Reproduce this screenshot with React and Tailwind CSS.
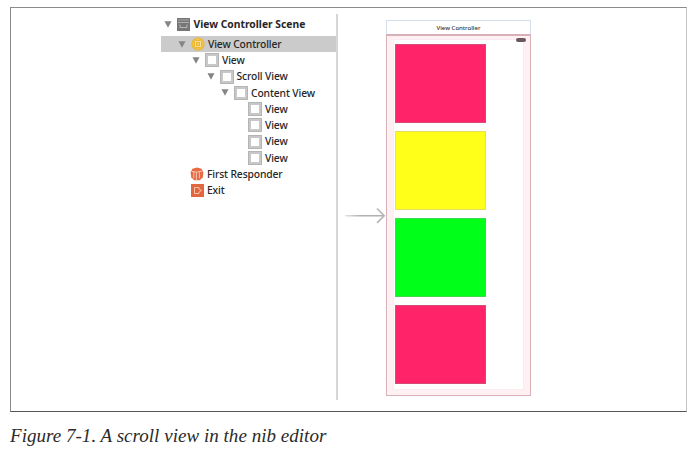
import React from "react";

function Triangle() {
  return (
    <svg className="block h-[7px] w-[8px] shrink-0" viewBox="0 0 8 7">
      <path d="M0.5 0.3H7.5L4 6.8Z" fill="#858585" />
    </svg>
  );
}

function ViewIcon() {
  return (
    <span className="flex h-[14px] w-[14px] shrink-0 items-center justify-center border border-[#b5b5b5] bg-[#c8c8c8]">
      <span className="h-[8px] w-[8px] bg-white" />
    </span>
  );
}

function SceneIcon() {
  return (
    <svg className="block h-[13px] w-[13px] shrink-0" viewBox="0 0 13 13">
      <rect width="13" height="13" fill="#767676" />
      <rect x="1" y="1" width="11" height="2" fill="#8f8f8f" />
      <rect x="1" y="4" width="11" height="1" fill="#b0b0b0" />
      <path d="M3 6.5V9.5H10V6.5" fill="none" stroke="#b8b8b8" strokeWidth="1" />
    </svg>
  );
}

function ControllerIcon() {
  return (
    <svg className="block h-[14px] w-[14px] shrink-0" viewBox="0 0 14 14">
      <circle cx="7" cy="7" r="6.6" fill="#ecb62f" />
      <circle cx="7" cy="7" r="4.9" fill="none" stroke="#f3cd68" strokeWidth="0.8" />
      <rect x="4.5" y="4.5" width="5" height="5" fill="#ecb62f" stroke="#f8df96" strokeWidth="1" />
      <rect x="6.3" y="6.3" width="1.4" height="1.4" fill="#fbe6a8" />
    </svg>
  );
}

function ResponderIcon() {
  return (
    <svg className="block h-[14px] w-[14px] shrink-0" viewBox="0 0 14 14">
      <path d="M7 0.5L11.6 1.8L13.4 5.6L12.8 10.2L9.8 13.2H4.2L1.2 10.2L0.6 5.6L2.4 1.8Z" fill="#e86a43" />
      <path d="M1.8 4.4L6.4 5.2L12.2 4M3.8 5V11M6.4 5.2V12.8M9.4 5.2V11.2" fill="none" stroke="#f9cebd" strokeWidth="0.9" />
    </svg>
  );
}

function ExitIcon() {
  return (
    <svg className="block h-[13px] w-[13px] shrink-0" viewBox="0 0 13 13">
      <rect width="13" height="13" fill="#e2673f" />
      <path d="M8 5V3.5H3.5V9.5H8V8M8 4.9L10.6 6.5L8 8.1" fill="none" stroke="#f6bfa9" strokeWidth="1" />
    </svg>
  );
}

const rows = [
  { label: "View Controller", indent: "pl-[17px]", open: true, icon: <ControllerIcon />, row: "bg-[#cbcbcb]" },
  { label: "View", indent: "pl-[31px]", open: true, icon: <ViewIcon /> },
  { label: "Scroll View", indent: "pl-[45.5px]", open: true, icon: <ViewIcon /> },
  { label: "Content View", indent: "pl-[60px]", open: true, icon: <ViewIcon /> },
  { label: "View", indent: "pl-[87px]", icon: <ViewIcon /> },
  { label: "View", indent: "pl-[87px]", icon: <ViewIcon /> },
  { label: "View", indent: "pl-[87px]", icon: <ViewIcon /> },
  { label: "View", indent: "pl-[87px]", icon: <ViewIcon /> },
  { label: "First Responder", indent: "pl-[29px]", icon: <ResponderIcon /> },
  { label: "Exit", indent: "pl-[30px]", icon: <ExitIcon /> },
];

function Outline() {
  return (
    <div className="h-[386px] w-[177px] border-r-2 border-[#d6d6d6] text-[10.3px] font-medium text-[#262626]">
      <div className="mb-[2px] flex h-[20px] items-center pl-[3px] font-bold">
        <Triangle />
        <span className="ml-[5px]"><SceneIcon /></span>
        <span className="ml-[3.5px] pt-[1px] whitespace-nowrap">View Controller Scene</span>
      </div>
      {rows.map((r, i) => (
        <div key={i} className={`flex h-[16.25px] items-center ${r.indent} ${r.row || ""}`}>
          {r.open && <span className="mr-[5px]"><Triangle /></span>}
          {r.icon}
          <span className="ml-[3px] pt-[1px] tracking-[-0.12px] whitespace-nowrap">{r.label}</span>
        </div>
      ))}
    </div>
  );
}

function EntryArrow() {
  return (
    <svg className="mt-[193px] ml-[6px] block h-[18px] w-[42px] shrink-0" viewBox="0 0 42 18">
      <defs>
        <linearGradient id="shaft" x1="0" x2="1">
          <stop offset="0" stopColor="#e4e4e4" />
          <stop offset="0.4" stopColor="#b0b0b0" />
        </linearGradient>
      </defs>
      <rect x="1" y="8" width="39" height="1.5" fill="url(#shaft)" />
      <path d="M33 1.5L40.2 8.7L33 15.9" fill="none" stroke="#b5b5b5" strokeWidth="1.6" />
    </svg>
  );
}

function Device() {
  return (
    <div className="mt-[6px] flex h-[376px] w-[145px] shrink-0 flex-col">
      <div className="flex h-[15px] items-center justify-center border border-b-0 border-[#d5dfee] pt-[1px] text-[6px] font-medium text-[#333]">
        View Controller
      </div>
      <div className="flex-1 border border-t-2 border-[#d8b0b8] bg-[#fff1f3] pt-[3px] pr-[6px] pb-[5px] pl-[6px]">
        <div className="relative h-[351px] border border-[#fdecef] bg-white">
          <div className="absolute -top-[2px] right-[-3px] h-[4px] w-[10px] rounded-full bg-[#6a5a5d]" />
          <div className="flex flex-col gap-[8px] pt-[4px] pl-[1px]">
            <div className="h-[79px] w-[91px] border border-[#d44a78] bg-[#ff2469]" />
            <div className="h-[79px] w-[91px] border border-[#e6dd62] bg-[#ffff19]" />
            <div className="h-[79px] w-[91px] border border-[#45d650] bg-[#00ff19]" />
            <div className="h-[79px] w-[91px] border border-[#d44a78] bg-[#ff2469]" />
          </div>
        </div>
      </div>
    </div>
  );
}

export default function App() {
  return (
    <div className="h-[451px] w-[700px] overflow-hidden bg-white pt-[7px] pl-[10px] font-['Noto_Sans','Open_Sans',sans-serif]">
      <div className="flex h-[405px] w-[677px] border border-t-[#8b8b8b] border-r-[#c4c4c4] border-b-[#555] border-l-[#8b8b8b] pt-[6px] pl-[150px]">
        <Outline />
        <EntryArrow />
        <Device />
      </div>
      <div className="mt-[12px] font-['Liberation_Serif',serif] text-[19px] leading-[24px] tracking-[0.03px] whitespace-nowrap text-[#2b2b2b] italic">
        Figure 7-1. A scroll view in the nib editor
      </div>
    </div>
  );
}
